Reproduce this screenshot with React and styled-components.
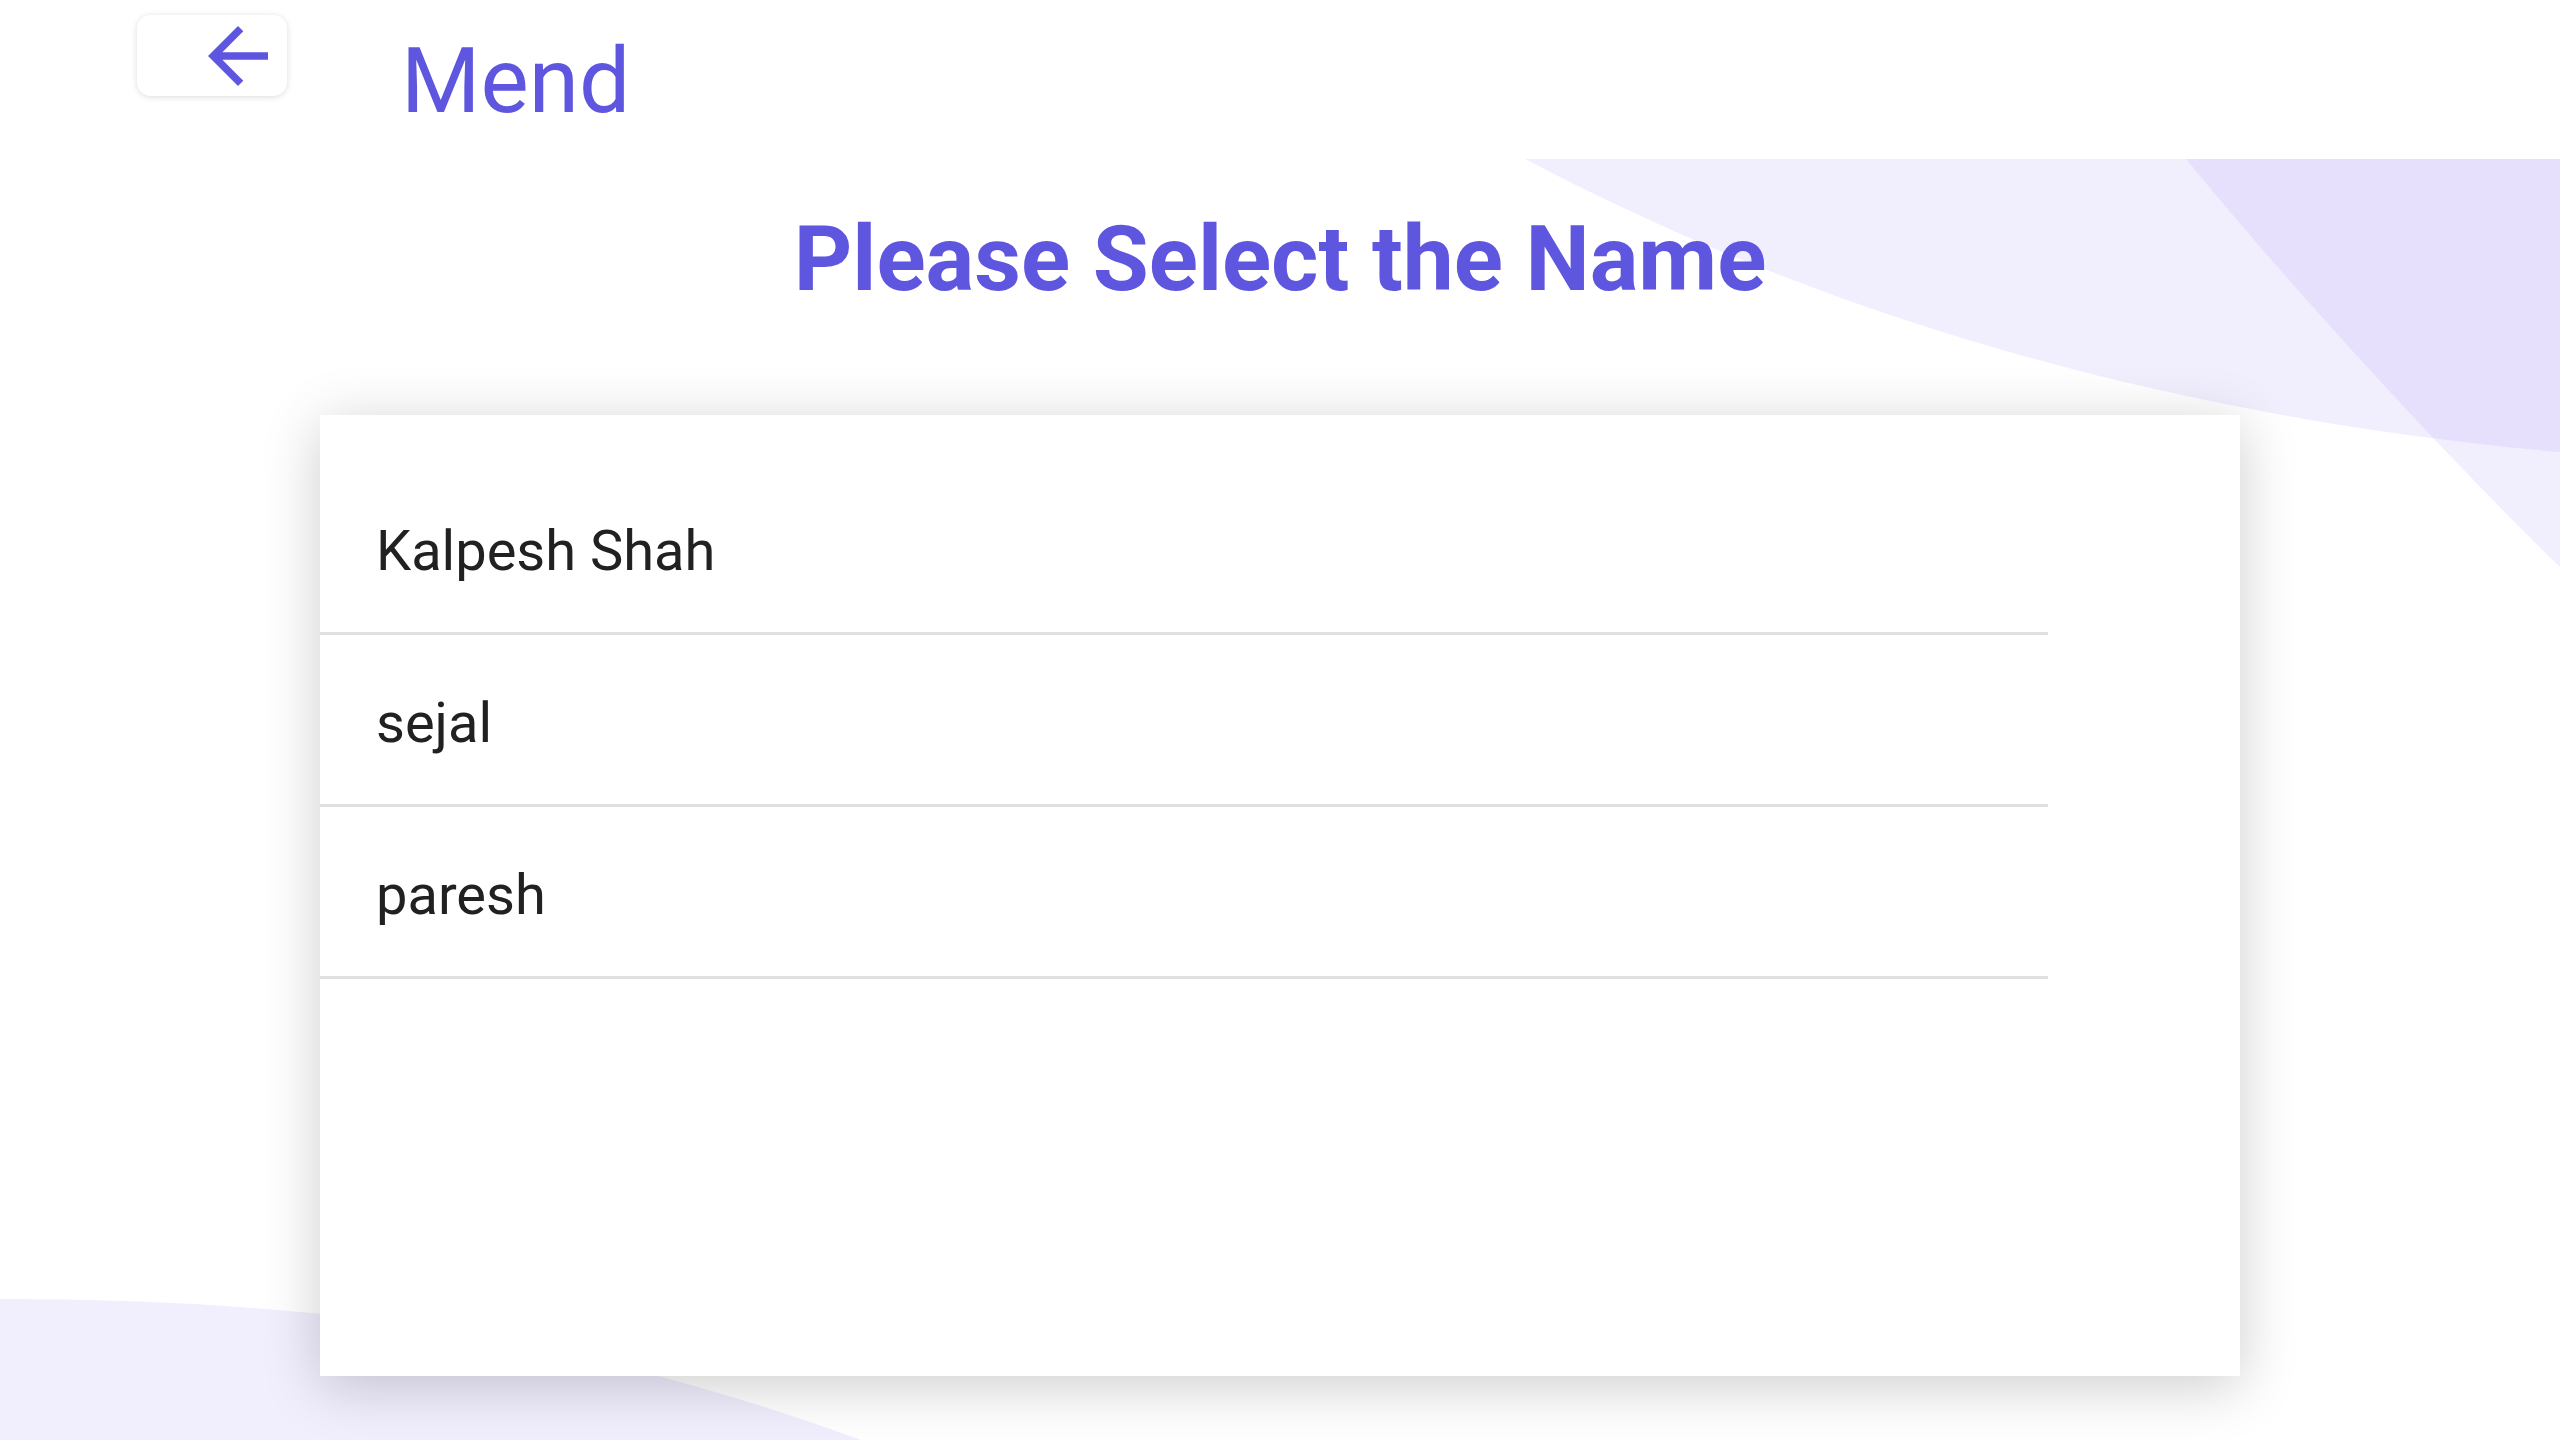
import styled, { createGlobalStyle } from 'styled-components';
import { MdArrowBack } from 'react-icons/md';

const names = ['Kalpesh Shah', 'sejal', 'paresh'];

const App = () => {
    return (
        <>
            <GlobalStyle />
            <Page>
                <Backdrop viewBox="0 0 2560 1440" preserveAspectRatio="none">
                    <path d="M1525 159 L2560 159 L2560 452 C2200 420 1850 330 1525 159 Z" fill="rgb(190,176,250)" fillOpacity="0.214" />
                    <path d="M2186 159 L2560 159 L2560 567 C2460 470 2310 310 2186 159 Z" fill="rgb(190,176,250)" fillOpacity="0.214" />
                    <path d="M0 1299 C300 1299 560 1330 861 1440 L0 1440 Z" fill="#F1EEFE" />
                </Backdrop>
                <Content>
                    <Header>
                        <BackBtn aria-label="Back">
                            <MdArrowBack size={90} />
                        </BackBtn>
                        <Brand>Mend</Brand>
                    </Header>
                    <Title>Please Select the Name</Title>
                    <Card>
                        <List>
                            {names.map((name) => (
                                <Row key={name}>
                                    <span>{name}</span>
                                </Row>
                            ))}
                        </List>
                    </Card>
                </Content>
            </Page>
        </>
    );
};

export default App;

const GlobalStyle = createGlobalStyle`
    html, body {
        margin: 0;
        padding: 0;
        background: #fff;
        font-family: Roboto, "Noto Sans", sans-serif;
    }
`;

const Page = styled.div`
    position: relative;
    width: 100%;
    min-height: 100vh;
    overflow: hidden;
`;

const Backdrop = styled.svg`
    position: absolute;
    top: 0;
    left: 0;
    width: 100%;
    height: 100%;
    z-index: 0;
`;

const Content = styled.div`
    position: relative;
    z-index: 1;
    display: flex;
    flex-direction: column;
    align-items: center;
`;

const Header = styled.div`
    align-self: stretch;
    height: 159px;
    box-sizing: border-box;
    padding: 15px 0 0 137px;
    display: flex;
    align-items: flex-start;
    gap: 114px;
`;

const BackBtn = styled.button`
    width: 150px;
    height: 81px;
    box-sizing: border-box;
    padding: 0 0 0 56px;
    border: none;
    outline: none;
    background: #fff;
    border-radius: 14px;
    box-shadow: 0 1px 6px rgba(0, 0, 0, 0.14);
    display: flex;
    align-items: center;
    color: #5f56e0;
    overflow: visible;
    svg {
        flex-shrink: 0;
    }
`;

const Brand = styled.div`
    margin-top: 21px;
    font-size: 91px;
    line-height: 1;
    font-weight: 400;
    color: #5f56e0;
`;

const Title = styled.h1`
    margin: 55px 0 0;
    font-size: 91px;
    line-height: 1;
    font-weight: 700;
    color: #5f56e0;
`;

const Card = styled.div`
    margin-top: 110px;
    width: 1920px;
    height: 961px;
    box-sizing: border-box;
    padding-top: 48px;
    background: #fff;
    box-shadow: 0 10px 55px rgba(0, 0, 0, 0.2);
`;

const List = styled.div`
    width: 90%;
    display: flex;
    flex-direction: column;
`;

const Row = styled.div`
    height: 172px;
    box-sizing: border-box;
    padding: 6px 0 0 56px;
    border-bottom: 3px solid #e0e0e0;
    display: flex;
    align-items: center;
    font-size: 56px;
    color: #212121;
`;
